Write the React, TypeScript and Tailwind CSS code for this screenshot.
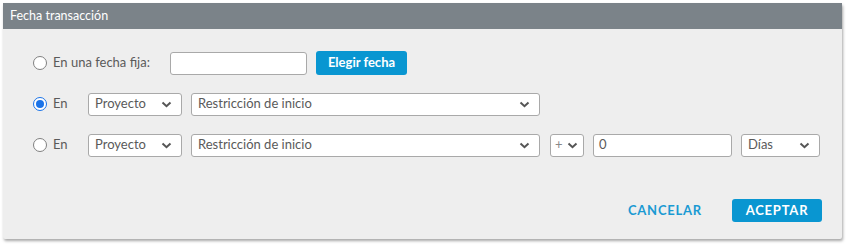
import React from 'react';

const font = { fontFamily: 'Lato, "Open Sans", sans-serif' };

function Chevron() {
  return (
    <svg width="11" height="7" viewBox="0 0 11 7" className="shrink-0">
      <polyline points="1.5,1.5 5.5,5.2 9.5,1.5" fill="none" stroke="#555" strokeWidth="2" />
    </svg>
  );
}

function Radio({ checked }: { checked?: boolean }) {
  return (
    <span
      className={
        'flex h-[14px] w-[14px] shrink-0 items-center justify-center rounded-full border bg-white ' +
        (checked ? 'border-[#1a73e8]' : 'border-[#808080]')
      }
    >
      {checked && <span className="h-[8px] w-[8px] rounded-full bg-[#1a73e8]" />}
    </span>
  );
}

function Select({ label, width }: { label: string; width: string }) {
  return (
    <div
      className={`flex h-[23px] items-center justify-between rounded-[3px] border border-[#a9a9a9] bg-white pl-[6px] pr-[9px] text-[13px] text-[#5a5a5a] ${width}`}
    >
      <span>{label}</span>
      <Chevron />
    </div>
  );
}

export default function App() {
  return (
    <div className="h-[246px] w-[847px] bg-white pl-[3px] pt-[3px]" style={font}>
      <div className="flex h-[236px] w-[839px] flex-col rounded-[2px] bg-[#eeeeee] shadow-[1px_2px_3px_rgba(0,0,0,0.35)]">
        <div className="flex h-[26px] items-center bg-[#7b8389] px-[7px] text-[12.5px] text-white">
          Fecha transacción
        </div>

        <div className="flex flex-col gap-[17px] pl-[30px] pt-[22px]">
          {/* fixed date */}
          <div className="flex h-[24px] items-center">
            <label className="flex w-[137px] items-center gap-[6px] text-[13px] text-[#5a5a5a]">
              <Radio />
              En una fecha fija:
            </label>
            <div className="h-[23px] w-[137px] rounded-[3px] border border-[#a9a9a9] bg-white" />
            <button className="ml-[9px] h-[24px] w-[91px] rounded-[3px] bg-[#0996d1] text-[13px] font-bold text-white">
              Elegir fecha
            </button>
          </div>

          {/* relative to project */}
          <div className="flex h-[24px] items-center">
            <label className="flex w-[55px] items-center gap-[6px] text-[13px] text-[#5a5a5a]">
              <Radio checked />
              En
            </label>
            <Select label="Proyecto" width="w-[94px]" />
            <div className="ml-[9px]">
              <Select label="Restricción de inicio" width="w-[349px]" />
            </div>
          </div>

          {/* relative with offset */}
          <div className="flex h-[24px] items-center">
            <label className="flex w-[55px] items-center gap-[6px] text-[13px] text-[#5a5a5a]">
              <Radio />
              En
            </label>
            <Select label="Proyecto" width="w-[94px]" />
            <div className="ml-[9px]">
              <Select label="Restricción de inicio" width="w-[349px]" />
            </div>
            <div className="ml-[10px] flex h-[23px] w-[34px] items-center justify-between rounded-[3px] border border-[#a9a9a9] bg-white pl-[4px] pr-[5px] text-[13px] text-[#888]">
              <span>+</span>
              <Chevron />
            </div>
            <div className="ml-[9px] flex h-[23px] w-[139px] items-center rounded-[3px] border border-[#a9a9a9] bg-white pl-[5px] text-[13px] text-[#5a5a5a]">
              0
            </div>
            <div className="ml-[9px]">
              <Select label="Días" width="w-[79px]" />
            </div>
          </div>
        </div>

        <div className="mt-auto flex items-center justify-end gap-[30px] pb-[17px] pr-[20px]">
          <button className="text-[13px] font-bold tracking-[0.06em] text-[#1a9ad3]">CANCELAR</button>
          <button className="h-[23px] w-[90px] rounded-[3px] bg-[#0996d1] text-[13px] font-bold tracking-[0.06em] text-white">
            ACEPTAR
          </button>
        </div>
      </div>
    </div>
  );
}
